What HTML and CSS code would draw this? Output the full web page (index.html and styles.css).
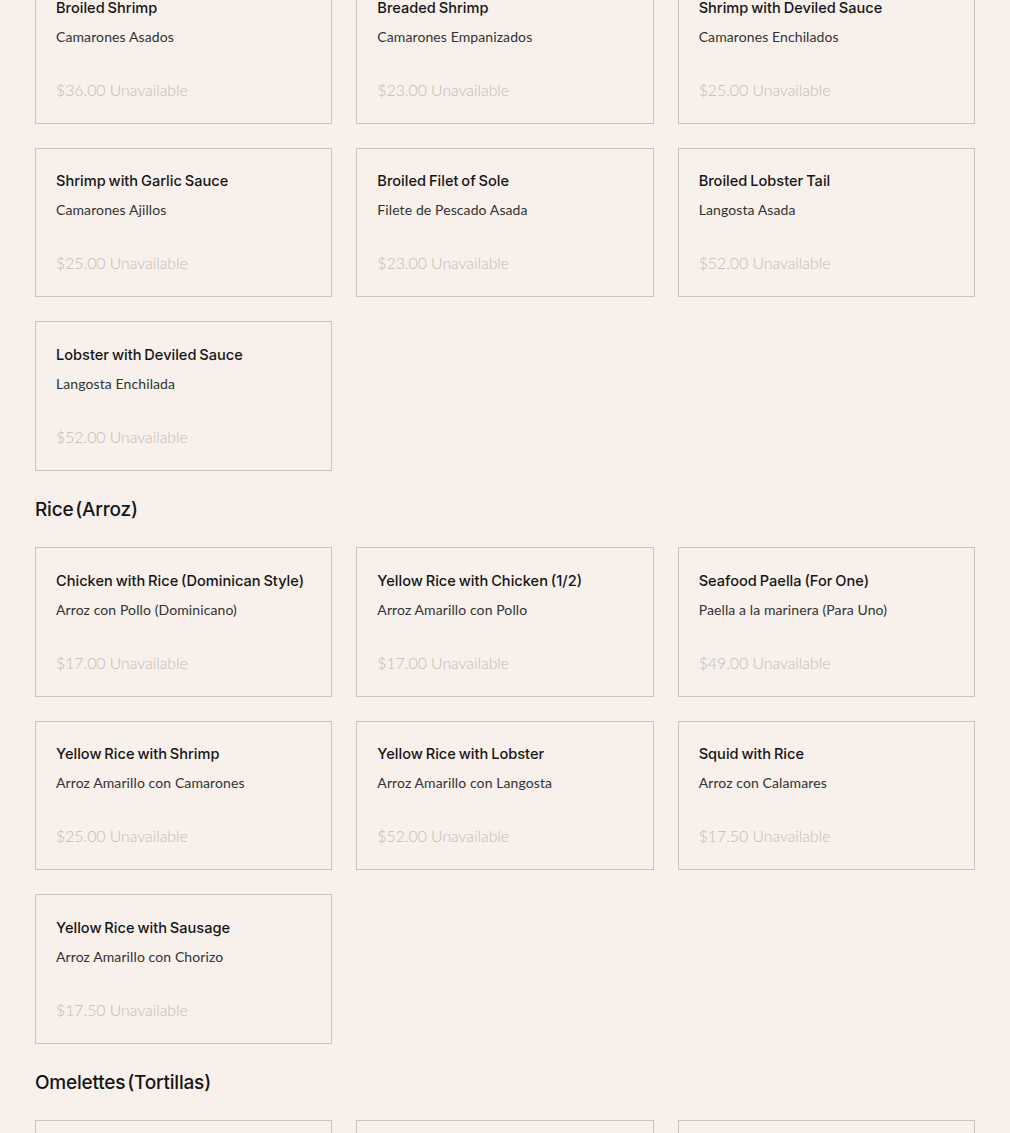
FILE: index.html
```html
<!DOCTYPE html>
<html lang="en">
<head>
<meta charset="utf-8">
<title>Menu</title>
<link rel="stylesheet" href="styles.css">
</head>
<body>
<main class="menu">
  <section class="section first">
    <div class="grid">
      <div class="card"><div class="title">Broiled Shrimp</div><div class="desc">Camarones Asados</div><div class="price">$36.00 Unavailable</div></div>
      <div class="card"><div class="title">Breaded Shrimp</div><div class="desc">Camarones Empanizados</div><div class="price">$23.00 Unavailable</div></div>
      <div class="card"><div class="title">Shrimp with Deviled Sauce</div><div class="desc">Camarones Enchilados</div><div class="price">$25.00 Unavailable</div></div>
      <div class="card"><div class="title">Shrimp with Garlic Sauce</div><div class="desc">Camarones Ajillos</div><div class="price">$25.00 Unavailable</div></div>
      <div class="card"><div class="title">Broiled Filet of Sole</div><div class="desc">Filete de Pescado Asada</div><div class="price">$23.00 Unavailable</div></div>
      <div class="card"><div class="title">Broiled Lobster Tail</div><div class="desc">Langosta Asada</div><div class="price">$52.00 Unavailable</div></div>
      <div class="card"><div class="title">Lobster with Deviled Sauce</div><div class="desc">Langosta Enchilada</div><div class="price">$52.00 Unavailable</div></div>
    </div>
  </section>
  <section class="section">
    <h2 class="heading">Rice (Arroz)</h2>
    <div class="grid">
      <div class="card"><div class="title">Chicken with Rice (Dominican Style)</div><div class="desc">Arroz con Pollo (Dominicano)</div><div class="price">$17.00 Unavailable</div></div>
      <div class="card"><div class="title">Yellow Rice with Chicken (1/2)</div><div class="desc">Arroz Amarillo con Pollo</div><div class="price">$17.00 Unavailable</div></div>
      <div class="card"><div class="title">Seafood Paella (For One)</div><div class="desc">Paella a la marinera (Para Uno)</div><div class="price">$49.00 Unavailable</div></div>
      <div class="card"><div class="title">Yellow Rice with Shrimp</div><div class="desc">Arroz Amarillo con Camarones</div><div class="price">$25.00 Unavailable</div></div>
      <div class="card"><div class="title">Yellow Rice with Lobster</div><div class="desc">Arroz Amarillo con Langosta</div><div class="price">$52.00 Unavailable</div></div>
      <div class="card"><div class="title">Squid with Rice</div><div class="desc">Arroz con Calamares</div><div class="price">$17.50 Unavailable</div></div>
      <div class="card"><div class="title">Yellow Rice with Sausage</div><div class="desc">Arroz Amarillo con Chorizo</div><div class="price">$17.50 Unavailable</div></div>
    </div>
  </section>
  <section class="section">
    <h2 class="heading">Omelettes (Tortillas)</h2>
    <div class="grid">
      <div class="card"><div class="title">Plain Omelette</div><div class="desc">Tortilla Sencilla</div><div class="price">$9.00 Unavailable</div></div>
      <div class="card"><div class="title">Cheese Omelette</div><div class="desc">Tortilla de Queso</div><div class="price">$10.00 Unavailable</div></div>
      <div class="card"><div class="title">Spanish Omelette</div><div class="desc">Tortilla Española</div><div class="price">$11.00 Unavailable</div></div>
    </div>
  </section>
</main>
</body>
</html>
```

FILE: styles.css
```css
html, body {
  margin: 0;
  padding: 0;
  background: #f7f0eb;
}
body {
  overflow: hidden;
  height: 1133px;
}
.menu {
  padding: 0 35px;
  margin-top: -25.8px;
}
.section {
  display: block;
}
.heading {
  margin: 27px 0 25.5px;
  font-family: Inter, "Liberation Sans", sans-serif;
  font-weight: 500;
  font-size: 19px;
  line-height: 24px;
  color: #151515;
  letter-spacing: -0.2px;
  word-spacing: -3px;
}
.grid {
  display: grid;
  grid-template-columns: repeat(3, 1fr);
  gap: 24px;
}
.card {
  border: 1px solid #cbc3bd;
  padding: 22.5px 20px 22px 20px;
  display: flex;
  flex-direction: column;
}
.title {
  font-family: Inter, "Liberation Sans", sans-serif;
  font-weight: 500;
  font-size: 14.6px;
  line-height: 20px;
  color: #161616;
  word-spacing: -1px;
}
.desc {
  margin-top: 10px;
  font-family: Lato, "Noto Sans", sans-serif;
  font-weight: 400;
  font-size: 14px;
  line-height: 18px;
  color: #333;
  letter-spacing: 0.1px;
}
.price {
  margin-top: 33px;
  font-family: Lato, "Noto Sans", sans-serif;
  font-weight: 300;
  font-size: 15.8px;
  line-height: 22px;
  color: #c4bcb6;
}
```
